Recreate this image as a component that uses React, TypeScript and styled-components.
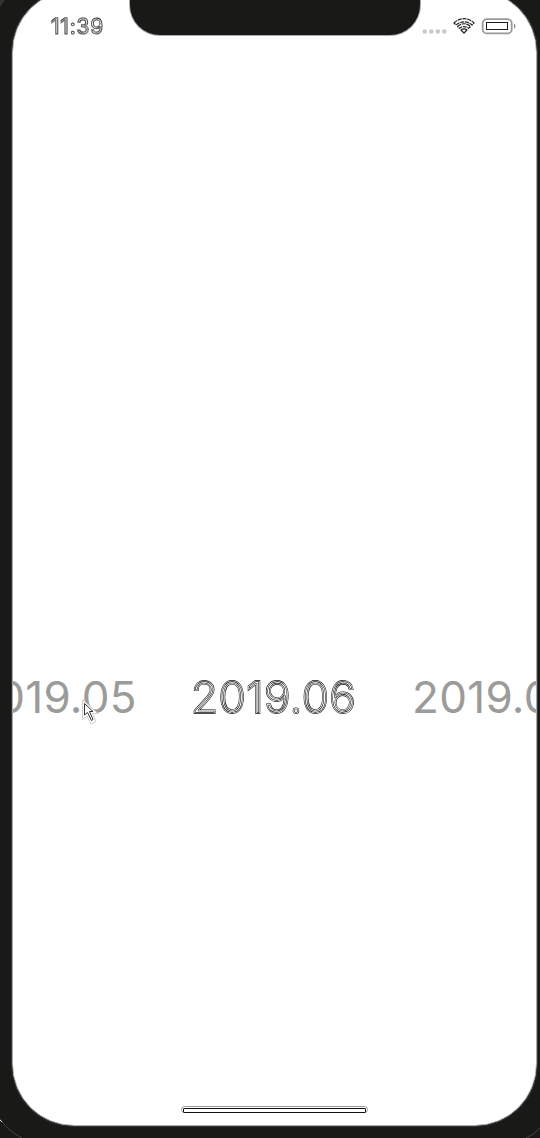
import React from "react";
import styled, { createGlobalStyle } from "styled-components";

const GlobalStyle = createGlobalStyle`
  * { box-sizing: border-box; }
  body { margin: 0; background: #191917; overflow: hidden; }
`;

const Device = styled.main`
  position: relative;
  width: 540px;
  height: 1138px;
  padding-left: 12px;
  overflow: hidden;
  background: #191917;
  font-family: Inter, "Liberation Sans", sans-serif;
`;

const Screen = styled.section`
  width: 525px;
  height: 1136px;
  margin-top: -10px;
  padding-top: 9px;
  border: 1px solid #aaa;
  border-radius: 62px;
  outline: 1px solid #353535;
  background: #fff;
  overflow: hidden;
  display: flex;
  flex-direction: column;
`;

const StatusBar = styled.header`
  display: flex;
  height: 53px;
  flex: none;
`;

/* A dark stroke split by a thinner white one: parallel contours round hollow digits. */
const Outlined = styled.span<{ $outer: number; $ring: number }>`
  position: relative;
  display: inline-block;
  will-change: transform;
  color: #fff;
  -webkit-text-stroke: ${(p) => p.$outer}px #000;
  &::after {
    content: attr(data-label);
    position: absolute;
    left: 0;
    top: 0;
    color: transparent;
    -webkit-text-stroke: ${(p) => p.$ring}px #fff;
  }
`;

const Clock = styled.time`
  width: 117px;
  flex: none;
  padding: 14px 0 0 38px;
  font-size: 21px;
  line-height: 26px;
  letter-spacing: 0.8px;
  white-space: nowrap;
`;

const Notch = styled.div`
  width: 290px;
  flex: none;
  height: 35px;
  border-radius: 0 0 30px 30px;
  background: #191917;
  box-shadow: 0 0 0 1px #aaa;
`;

const Indicators = styled.div`
  padding: 16px 0 0 2px;
`;

const Months = styled.div`
  display: flex;
  gap: 55px;
  width: 662px;
  margin: 618px 0 0 -43px;
  font-size: 44px;
  line-height: 52px;
  letter-spacing: 0.3px;
  white-space: nowrap;
`;

const Month = styled.div<{ $current?: boolean }>`
  flex: none;
  width: 166px;
  color: #9b9b99;
  font-weight: ${(p) => (p.$current ? 300 : 400)};
  letter-spacing: ${(p) => (p.$current ? "0.5px" : "0.3px")};
`;

const HomeBar = styled.div`
  width: 187px;
  height: 7px;
  margin: auto auto 12px 168px;
  border: 1px solid #999;
  border-radius: 4px;
  padding: 1px;
  &::before {
    content: "";
    display: block;
    height: 3px;
    border: 1px solid #111;
    border-radius: 1px;
  }
`;

const Pointer = styled.svg`
  position: absolute;
  left: 79px;
  top: 698px;
`;

const Corners = styled.svg`
  position: absolute;
  left: 0;
  top: 0;
  pointer-events: none;
`;

export default function App() {
  return (
    <>
      <GlobalStyle />
      <Device>
        <Screen>
          <StatusBar>
            <Clock><Outlined $outer={1} $ring={0.25} data-label="11:39">11:39</Outlined></Clock>
            <Notch />
            <Indicators>
              <svg width="98" height="22" viewBox="422 16 98 22" fill="none">
                <g fill="#c9c9c9">
                  <circle cx="424.8" cy="31.5" r="2.3" />
                  <circle cx="431.3" cy="31.5" r="2.3" />
                  <circle cx="437.8" cy="31.5" r="2.3" />
                  <circle cx="444.3" cy="31.5" r="2.3" />
                </g>
                <g stroke="#222" strokeWidth="1.2" strokeLinejoin="round">
                  <path d="M454 23C459.5 17.3 468.5 17.3 474 23L472 25C467.5 20.8 460.5 20.8 456 25Z" strokeDasharray="4 0.8" />
                  <path d="M457.5 26.4C461.3 22.9 466.7 22.9 470.5 26.4L468.5 28.4C465.7 26 462.3 26 459.5 28.4Z" strokeDasharray="4 0.8" />
                  <path d="M461 30C463 28.5 465 28.5 467 30L464 33Z" />
                </g>
                <rect x="482.7" y="19.2" width="29" height="14.2" rx="4" stroke="#999" strokeWidth="1.8" />
                <rect x="486.5" y="22.5" width="21" height="7" stroke="#1c1c1c" />
                <path d="M514 23.5q3 2.6 0 5.2z" fill="#888" />
              </svg>
            </Indicators>
          </StatusBar>
          <Months>
            <Month>2019.05</Month>
            <Month $current><Outlined $outer={1.8} $ring={0.7} data-label="2019.06">2019.06</Outlined></Month>
            <Month>2019.07</Month>
          </Months>
          <HomeBar />
        </Screen>
        <Pointer width="22" height="28" viewBox="79 698 22 28" fill="none">
          <path d="M82.5 699.5V719.5L87 716L91 724L96 721.5L92.5 713.5H98Z" fill="#fff" stroke="#ccc" />
          <path d="M84.5 703.5V715L87.5 712.5L91.5 720.5L93 719.5L89.5 711.5H93Z" fill="#fff" stroke="#333" />
        </Pointer>
        <Corners width="540" height="1138" viewBox="0 0 540 1138" fill="none">
          <path d="M0 1119Q7 1130 22 1138M526 1138Q534 1135 540 1128" stroke="#444" />
          <path d="M0 1120L2 1122" stroke="#ddd" />
          <path d="M0 0h5L0 7z" fill="#333" />
        </Corners>
      </Device>
    </>
  );
}
